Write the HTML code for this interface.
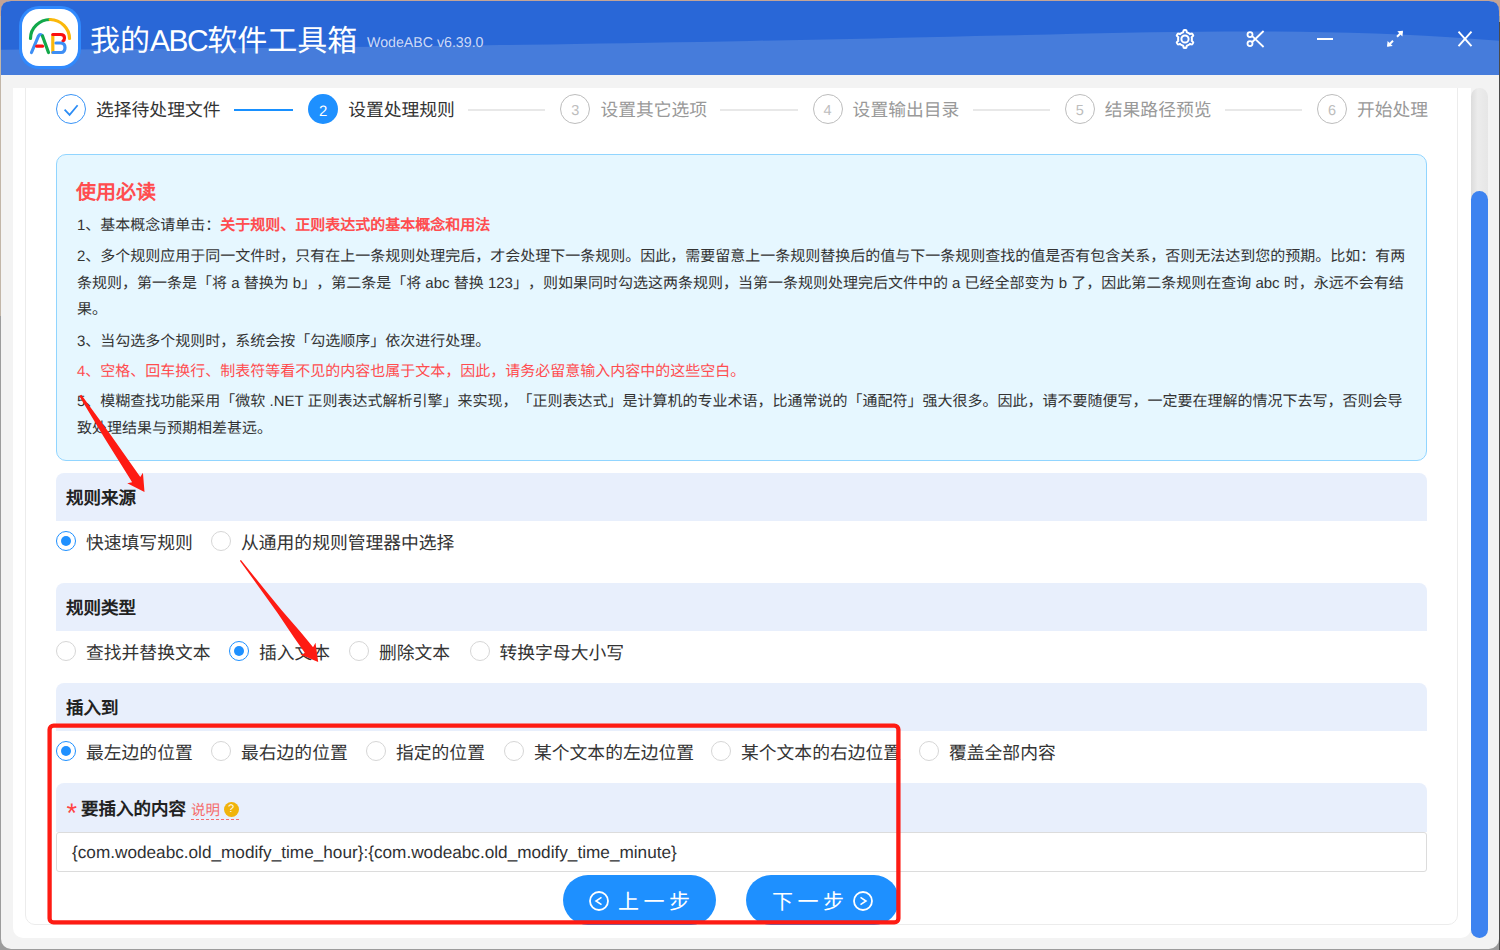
<!DOCTYPE html>
<html lang="zh-CN"><head><meta charset="utf-8">
<style>
*{margin:0;padding:0;box-sizing:border-box}
html,body{width:1500px;height:950px;overflow:hidden}
body{text-spacing-trim:space-all;text-rendering:geometricPrecision;background:#9c9c9c;font-family:"Liberation Sans",sans-serif;position:relative;color:#333}
.abs{position:absolute}
#win{position:absolute;left:1px;top:1px;width:1498px;height:948px;border-radius:10px;background:#f3f3f3;overflow:hidden}
#panel{position:absolute;left:13px;top:88px;width:1458px;height:850px;background:#fff;border-radius:0 0 10px 10px;overflow:hidden}
#inner{position:absolute;left:12px;top:-20px;width:1433px;height:857px;border:1px solid #ececec;border-radius:10px}
#track{position:absolute;left:1471px;top:88px;width:17px;height:850px;border-radius:9px;background:linear-gradient(90deg,#dcdcdc,#ececec 40%,#e6e6e6)}
#thumb{position:absolute;left:1471px;top:191px;width:17px;height:747px;border-radius:9px;background:#3d83f0}
.txt{position:absolute;white-space:nowrap;line-height:1}
</style></head><body>
<div class="abs" style="left:0;top:0;width:1500px;height:16px;background:#c4a496"></div>
<div class="abs" style="left:0;top:16px;width:1px;height:300px;background:#c2b6a8"></div>
<div class="abs" style="left:1499px;top:22px;width:1px;height:928px;background:#4a4a4a"></div>
<div id="win"></div>
<!-- title bar -->
<svg class="abs" style="left:1px;top:1px" width="1498" height="74" viewBox="1 1 1498 74">
  <path d="M1 11 Q1 1 11 1 L1489 1 Q1499 1 1499 11 L1499 75 L1 75 Z" fill="#2967d7"/>
  <path d="M0 49.7 L25 49.6 L50 49.5 L75 49.4 L100 49.2 L125 49.1 L150 48.9 L175 48.7 L200 48.5 L225 48.3 L250 48.1 L275 47.8 L300 47.6 L325 47.3 L350 47.0 L375 46.8 L400 46.5 L425 46.1 L450 45.8 L475 45.5 L500 45.1 L525 44.8 L550 44.4 L575 44.0 L600 43.6 L625 43.2 L650 42.7 L675 42.3 L700 41.9 L725 41.4 L750 40.9 L775 40.4 L800 39.9 L825 39.4 L850 38.9 L875 38.4 L900 37.8 L925 37.3 L950 36.7 L975 36.1 L1000 35.6 L1025 35.0 L1050 34.4 L1075 33.8 L1100 33.3 L1125 32.8 L1150 32.3 L1175 32.0 L1200 31.7 L1225 31.6 L1250 31.5 L1275 31.6 L1300 31.8 L1325 32.2 L1350 32.8 L1375 33.6 L1400 34.6 L1425 35.8 L1450 37.2 L1475 38.9 L1500 40.8 L1500 75 L0 75 Z" fill="#467cdb"/>
</svg>

<!-- logo -->
<div class="abs" style="left:19px;top:6px;width:62px;height:63px;border-radius:20px;background:#3089fd"></div>
<div class="abs" style="left:22px;top:9px;width:56px;height:57px;border-radius:17px;background:#fff"></div>
<svg class="abs" style="left:15px;top:0px" width="70" height="75" viewBox="0 0 70 75">
  <g fill="none" stroke-linecap="round" stroke-width="3.2">
    <path d="M15.5 38.5 A20 19 0 0 1 35.2 19.5" stroke="#12a84a"/>
    <path d="M35.2 19.5 A20 19 0 0 1 54.5 38.5" stroke="#fbb80a"/>
    <path d="M16.5 52.5 L23.5 36 Q25.3 33 27.5 36" stroke="#3d8ef5"/>
    <path d="M27.5 36 L33.5 52.5" stroke="#12a84a"/>
    <path d="M21.8 46.2 L27.5 46.2" stroke="#fb0f0f"/>
    <path d="M37.8 35 L37.8 52.5" stroke="#fbb80a"/>
    <path d="M37.8 34.5 L45.5 34.5 Q49.5 34.5 49.5 38 Q49.5 40 48 41" stroke="#fb0f0f"/>
    <path d="M38 52.5 L46 52.5 Q50 52.5 50 47.5 Q50 43 45.5 43 L41 43" stroke="#3d8ef5"/>
  </g>
</svg>
<div class="txt" style="left:90px;top:26.5px;font-size:30px;color:#fff">我的<span style="letter-spacing:-1.5px">ABC</span>软件工具箱</div>
<div class="txt" style="left:367px;top:35.5px;font-size:14.2px;color:#cfdaf5">WodeABC v6.39.0</div>
<!-- icons -->
<svg class="abs" style="left:1170px;top:24px" width="30" height="30" viewBox="0 0 30 30">
  <path d="M21.90 15.00 L21.90 15.24 L21.88 15.48 L21.86 15.72 L21.83 15.96 L21.80 16.20 L21.75 16.43 L21.70 16.67 L21.91 16.98 L22.38 17.40 L22.83 17.85 L23.25 18.33 L23.13 18.62 L23.00 18.90 L22.86 19.18 L22.71 19.45 L22.55 19.72 L22.38 19.98 L22.20 20.23 L22.01 20.48 L21.38 20.35 L20.76 20.19 L20.17 19.99 L19.79 19.96 L19.62 20.13 L19.44 20.29 L19.25 20.44 L19.06 20.58 L18.86 20.72 L18.66 20.85 L18.45 20.98 L18.24 21.09 L18.02 21.20 L17.81 21.30 L17.58 21.40 L17.36 21.48 L17.13 21.56 L16.90 21.63 L16.74 21.97 L16.61 22.59 L16.45 23.20 L16.24 23.81 L15.93 23.85 L15.62 23.88 L15.31 23.89 L15.00 23.90 L14.69 23.89 L14.38 23.88 L14.07 23.85 L13.76 23.81 L13.55 23.20 L13.39 22.59 L13.26 21.97 L13.10 21.63 L12.87 21.56 L12.64 21.48 L12.42 21.40 L12.19 21.30 L11.98 21.20 L11.76 21.09 L11.55 20.98 L11.34 20.85 L11.14 20.72 L10.94 20.58 L10.75 20.44 L10.56 20.29 L10.38 20.13 L10.21 19.96 L9.83 19.99 L9.24 20.19 L8.62 20.35 L7.99 20.48 L7.80 20.23 L7.62 19.98 L7.45 19.72 L7.29 19.45 L7.14 19.18 L7.00 18.90 L6.87 18.62 L6.75 18.33 L7.17 17.85 L7.62 17.40 L8.09 16.98 L8.30 16.67 L8.25 16.43 L8.20 16.20 L8.17 15.96 L8.14 15.72 L8.12 15.48 L8.10 15.24 L8.10 15.00 L8.10 14.76 L8.12 14.52 L8.14 14.28 L8.17 14.04 L8.20 13.80 L8.25 13.57 L8.30 13.33 L8.09 13.02 L7.62 12.60 L7.17 12.15 L6.75 11.67 L6.87 11.38 L7.00 11.10 L7.14 10.82 L7.29 10.55 L7.45 10.28 L7.62 10.02 L7.80 9.77 L7.99 9.52 L8.62 9.65 L9.24 9.81 L9.83 10.01 L10.21 10.04 L10.38 9.87 L10.56 9.71 L10.75 9.56 L10.94 9.42 L11.14 9.28 L11.34 9.15 L11.55 9.02 L11.76 8.91 L11.98 8.80 L12.19 8.70 L12.42 8.60 L12.64 8.52 L12.87 8.44 L13.10 8.37 L13.26 8.03 L13.39 7.41 L13.55 6.80 L13.76 6.19 L14.07 6.15 L14.38 6.12 L14.69 6.11 L15.00 6.10 L15.31 6.11 L15.62 6.12 L15.93 6.15 L16.24 6.19 L16.45 6.80 L16.61 7.41 L16.74 8.03 L16.90 8.37 L17.13 8.44 L17.36 8.52 L17.58 8.60 L17.81 8.70 L18.02 8.80 L18.24 8.91 L18.45 9.02 L18.66 9.15 L18.86 9.28 L19.06 9.42 L19.25 9.56 L19.44 9.71 L19.62 9.87 L19.79 10.04 L20.17 10.01 L20.76 9.81 L21.38 9.65 L22.01 9.52 L22.20 9.77 L22.38 10.02 L22.55 10.28 L22.71 10.55 L22.86 10.82 L23.00 11.10 L23.13 11.38 L23.25 11.67 L22.83 12.15 L22.38 12.60 L21.91 13.02 L21.70 13.33 L21.75 13.57 L21.80 13.80 L21.83 14.04 L21.86 14.28 L21.88 14.52 L21.90 14.76Z" fill="none" stroke="#fff" stroke-width="2" stroke-linejoin="round"/>
  <circle cx="15" cy="15" r="3.6" fill="none" stroke="#fff" stroke-width="2"/>
</svg>
<svg class="abs" style="left:1240px;top:24px" width="30" height="30" viewBox="0 0 30 30">
  <circle cx="10" cy="10.6" r="2.5" fill="none" stroke="#fff" stroke-width="1.8"/>
  <circle cx="10" cy="19.6" r="2.5" fill="none" stroke="#fff" stroke-width="1.8"/>
  <path d="M23.6 7 L12.2 18 M23.6 23 L12.2 12.2" stroke="#fff" stroke-width="1.8"/>
</svg>
<div class="abs" style="left:1317px;top:38px;width:16px;height:2px;background:#fff"></div>
<svg class="abs" style="left:1380px;top:24px" width="30" height="30" viewBox="0 0 30 30">
  <path d="M8 21.7 L13 16.7 M17 12.7 L22 7.7" stroke="#fff" stroke-width="2"/>
  <path d="M7 22.7 L7.6 17 L12.7 22.1 Z M23 6.7 L22.4 12.4 L17.3 7.3 Z" fill="#fff"/>
</svg>
<svg class="abs" style="left:1450px;top:24px" width="30" height="30" viewBox="0 0 30 30">
  <path d="M8.5 7.7 L21.5 22.2 M21.5 7.7 L8.5 22.2" stroke="#fff" stroke-width="1.9"/>
</svg>
<div id="panel"><div id="inner"></div></div>
<!-- steps -->
<div class="abs" style="left:56.0px;top:94px;width:30px;height:30px;border:1.3px solid #3b95f7;border-radius:50%"></div>
<svg class="abs" style="left:56.0px;top:94px" width="30" height="30" viewBox="0 0 30 30"><path d="M8.6 15.6 L13.6 20.9 L21.6 11.2" fill="none" stroke="#2b8cf5" stroke-width="1.7"/></svg>
<div class="txt" style="left:96.0px;top:101.5px;font-size:17.8px;color:#333">选择待处理文件</div>
<div class="abs" style="left:308.2px;top:94px;width:30px;height:30px;background:#1e90ff;border-radius:50%;color:#fff;font-size:15px;line-height:35.5px;text-align:center">2</div>
<div class="txt" style="left:348.2px;top:101.5px;font-size:17.8px;color:#333">设置处理规则</div>
<div class="abs" style="left:560.4px;top:94px;width:30px;height:30px;border:1px solid #bdbdbd;border-radius:50%;color:#bdbdbd;font-size:14.5px;line-height:33px;text-align:center">3</div>
<div class="txt" style="left:600.4px;top:101.5px;font-size:17.8px;color:#999">设置其它选项</div>
<div class="abs" style="left:812.6px;top:94px;width:30px;height:30px;border:1px solid #bdbdbd;border-radius:50%;color:#bdbdbd;font-size:14.5px;line-height:33px;text-align:center">4</div>
<div class="txt" style="left:852.6px;top:101.5px;font-size:17.8px;color:#999">设置输出目录</div>
<div class="abs" style="left:1064.8px;top:94px;width:30px;height:30px;border:1px solid #bdbdbd;border-radius:50%;color:#bdbdbd;font-size:14.5px;line-height:33px;text-align:center">5</div>
<div class="txt" style="left:1104.8px;top:101.5px;font-size:17.8px;color:#999">结果路径预览</div>
<div class="abs" style="left:1317.0px;top:94px;width:30px;height:30px;border:1px solid #bdbdbd;border-radius:50%;color:#bdbdbd;font-size:14.5px;line-height:33px;text-align:center">6</div>
<div class="txt" style="left:1357.0px;top:101.5px;font-size:17.8px;color:#999">开始处理</div>
<div class="abs" style="left:234px;top:109px;width:59px;height:2px;background:#1890ff"></div>
<div class="abs" style="left:468px;top:109px;width:77px;height:2px;background:#e8e8e8"></div>
<div class="abs" style="left:720px;top:109px;width:78px;height:2px;background:#e8e8e8"></div>
<div class="abs" style="left:973px;top:109px;width:77px;height:2px;background:#e8e8e8"></div>
<div class="abs" style="left:1225px;top:109px;width:77px;height:2px;background:#e8e8e8"></div>
<!-- info box -->
<div class="abs" style="left:56px;top:154px;width:1371px;height:307px;background:#e6f7ff;border:1px solid #91d5ff;border-radius:10px"></div>
<div class="txt" style="left:76px;top:183px;font-size:20px;font-weight:bold;color:#ff4d4f">使用必读</div>
<div class="abs" style="left:77px;top:212.0px;height:27px;line-height:27px;white-space:nowrap;font-size:15px;color:#333;">1、基本概念请单击：<b style="color:#ff4d4f">关于规则、正则表达式的基本概念和用法</b></div>
<div class="abs" style="left:77px;top:242.7px;height:27px;line-height:27px;white-space:nowrap;font-size:15px;color:#333;">2、多个规则应用于同一文件时，只有在上一条规则处理完后，才会处理下一条规则。因此，需要留意上一条规则替换后的值与下一条规则查找的值是否有包含关系，否则无法达到您的预期。比如：有两</div>
<div class="abs" style="left:77px;top:269.9px;height:27px;line-height:27px;white-space:nowrap;font-size:15px;color:#333;">条规则，第一条是「将 a 替换为 b」，第二条是「将 abc 替换 123」，则如果同时勾选这两条规则，当第一条规则处理完后文件中的 a 已经全部变为 b 了，因此第二条规则在查询 abc 时，永远不会有结</div>
<div class="abs" style="left:77px;top:296.4px;height:27px;line-height:27px;white-space:nowrap;font-size:15px;color:#333;">果。</div>
<div class="abs" style="left:77px;top:327.5px;height:27px;line-height:27px;white-space:nowrap;font-size:15px;color:#333;">3、当勾选多个规则时，系统会按「勾选顺序」依次进行处理。</div>
<div class="abs" style="left:77px;top:357.5px;height:27px;line-height:27px;white-space:nowrap;font-size:15px;color:#333;color:#ff4d4f">4、空格、回车换行、制表符等看不见的内容也属于文本，因此，请务必留意输入内容中的这些空白。</div>
<div class="abs" style="left:77px;top:387.5px;height:27px;line-height:27px;white-space:nowrap;font-size:15px;color:#333;">5、模糊查找功能采用「微软 .NET 正则表达式解析引擎」来实现，「正则表达式」是计算机的专业术语，比通常说的「通配符」强大很多。因此，请不要随便写，一定要在理解的情况下去写，否则会导</div>
<div class="abs" style="left:77px;top:414.5px;height:27px;line-height:27px;white-space:nowrap;font-size:15px;color:#333;">致处理结果与预期相差甚远。</div>
<!-- sections -->
<div class="abs" style="left:56px;top:473px;width:1371px;height:47.5px;background:#e8effc;border-radius:8px 8px 0 0"></div>
<div class="abs" style="left:66px;top:484.5px;height:27px;line-height:27px;white-space:nowrap;font-size:17.5px;font-weight:bold;color:#222">规则来源</div>
<div class="abs" style="left:56px;top:583px;width:1371px;height:48px;background:#e8effc;border-radius:8px 8px 0 0"></div>
<div class="abs" style="left:66px;top:594.5px;height:27px;line-height:27px;white-space:nowrap;font-size:17.5px;font-weight:bold;color:#222">规则类型</div>
<div class="abs" style="left:56px;top:683px;width:1371px;height:48px;background:#e8effc;border-radius:8px 8px 0 0"></div>
<div class="abs" style="left:66px;top:694.5px;height:27px;line-height:27px;white-space:nowrap;font-size:17.5px;font-weight:bold;color:#222">插入到</div>
<div class="abs" style="left:56px;top:783px;width:1371px;height:49px;background:#e8effc;border-radius:8px 8px 0 0"></div>
<div class="abs" style="left:56px;top:531px;width:20px;height:20px;border:1px solid #1e90ff;border-radius:50%"></div>
<div class="abs" style="left:61px;top:536px;width:10px;height:10px;background:#1e90ff;border-radius:50%"></div>
<div class="abs" style="left:86px;top:529.5px;height:27px;line-height:27px;white-space:nowrap;font-size:17.8px;color:#333">快速填写规则</div>
<div class="abs" style="left:211px;top:531px;width:20px;height:20px;border:1px solid #d6d6d6;border-radius:50%"></div>
<div class="abs" style="left:241px;top:529.5px;height:27px;line-height:27px;white-space:nowrap;font-size:17.8px;color:#333">从通用的规则管理器中选择</div>
<div class="abs" style="left:56px;top:641px;width:20px;height:20px;border:1px solid #d6d6d6;border-radius:50%"></div>
<div class="abs" style="left:86px;top:639.5px;height:27px;line-height:27px;white-space:nowrap;font-size:17.8px;color:#333">查找并替换文本</div>
<div class="abs" style="left:229px;top:641px;width:20px;height:20px;border:1px solid #1e90ff;border-radius:50%"></div>
<div class="abs" style="left:234px;top:646px;width:10px;height:10px;background:#1e90ff;border-radius:50%"></div>
<div class="abs" style="left:259px;top:639.5px;height:27px;line-height:27px;white-space:nowrap;font-size:17.8px;color:#333">插入文本</div>
<div class="abs" style="left:349px;top:641px;width:20px;height:20px;border:1px solid #d6d6d6;border-radius:50%"></div>
<div class="abs" style="left:379px;top:639.5px;height:27px;line-height:27px;white-space:nowrap;font-size:17.8px;color:#333">删除文本</div>
<div class="abs" style="left:469.5px;top:641px;width:20px;height:20px;border:1px solid #d6d6d6;border-radius:50%"></div>
<div class="abs" style="left:499.5px;top:639.5px;height:27px;line-height:27px;white-space:nowrap;font-size:17.8px;color:#333">转换字母大小写</div>
<div class="abs" style="left:56px;top:741px;width:20px;height:20px;border:1px solid #1e90ff;border-radius:50%"></div>
<div class="abs" style="left:61px;top:746px;width:10px;height:10px;background:#1e90ff;border-radius:50%"></div>
<div class="abs" style="left:86px;top:739.5px;height:27px;line-height:27px;white-space:nowrap;font-size:17.8px;color:#333">最左边的位置</div>
<div class="abs" style="left:211px;top:741px;width:20px;height:20px;border:1px solid #d6d6d6;border-radius:50%"></div>
<div class="abs" style="left:241px;top:739.5px;height:27px;line-height:27px;white-space:nowrap;font-size:17.8px;color:#333">最右边的位置</div>
<div class="abs" style="left:366px;top:741px;width:20px;height:20px;border:1px solid #d6d6d6;border-radius:50%"></div>
<div class="abs" style="left:396px;top:739.5px;height:27px;line-height:27px;white-space:nowrap;font-size:17.8px;color:#333">指定的位置</div>
<div class="abs" style="left:504px;top:741px;width:20px;height:20px;border:1px solid #d6d6d6;border-radius:50%"></div>
<div class="abs" style="left:534px;top:739.5px;height:27px;line-height:27px;white-space:nowrap;font-size:17.8px;color:#333">某个文本的左边位置</div>
<div class="abs" style="left:711px;top:741px;width:20px;height:20px;border:1px solid #d6d6d6;border-radius:50%"></div>
<div class="abs" style="left:741px;top:739.5px;height:27px;line-height:27px;white-space:nowrap;font-size:17.8px;color:#333">某个文本的右边位置</div>
<div class="abs" style="left:919px;top:741px;width:20px;height:20px;border:1px solid #d6d6d6;border-radius:50%"></div>
<div class="abs" style="left:949px;top:739.5px;height:27px;line-height:27px;white-space:nowrap;font-size:17.8px;color:#333">覆盖全部内容</div>
<div class="txt" style="left:66.5px;top:800px;font-size:27px;color:#f44">*</div>
<div class="abs" style="left:81px;top:795.5px;height:27px;line-height:27px;white-space:nowrap;font-size:17.5px;font-weight:bold;color:#222">要插入的内容</div>
<div class="abs" style="left:191px;top:796px;height:24px;line-height:30px;white-space:nowrap;font-size:14.5px;color:#f56c6c;border-bottom:1px dashed #f56c6c">说明 <span style="display:inline-block;width:15px;height:15px;border-radius:50%;background:#f0b30b;color:#fff;font-size:11px;line-height:15px;text-align:center;vertical-align:3px;margin-left:-0.5px">?</span></div>
<div class="abs" style="left:56px;top:832px;width:1371px;height:40px;border:1px solid #dcdcdc;border-radius:3px;background:#fff"></div>
<div class="abs" style="left:72px;top:838.5px;height:27px;line-height:27px;white-space:nowrap;font-size:17.2px;color:#303133">{com.wodeabc.old_modify_time_hour}:{com.wodeabc.old_modify_time_minute}</div>
<!-- buttons -->
<div class="abs" style="left:563px;top:875px;width:153px;height:50px;border-radius:25px;background:#1e90ff"></div>
<div class="abs" style="left:746px;top:875px;width:153px;height:50px;border-radius:25px;background:#1e90ff"></div>
<svg class="abs" style="left:589px;top:891px" width="20" height="20" viewBox="0 0 20 20"><circle cx="10" cy="10" r="9" fill="none" stroke="#fff" stroke-width="1.8"/><path d="M12.5 6.3 L7 10 L12.5 13.7" fill="none" stroke="#fff" stroke-width="1.6"/></svg>
<svg class="abs" style="left:853px;top:891px" width="20" height="20" viewBox="0 0 20 20"><circle cx="10" cy="10" r="9" fill="none" stroke="#fff" stroke-width="1.8"/><path d="M7.5 6.3 L13 10 L7.5 13.7" fill="none" stroke="#fff" stroke-width="1.6"/></svg>
<div class="txt" style="left:618px;top:891.5px;font-size:21px;color:#fff;letter-spacing:4.5px;font-weight:300">上一步</div>
<div class="txt" style="left:772px;top:891.5px;font-size:21px;color:#fff;letter-spacing:4.5px;font-weight:300">下一步</div>
<!-- annotations -->
<svg class="abs" style="left:0;top:0" width="1500" height="950" viewBox="0 0 1500 950">
  <rect x="49.6" y="725.6" width="848.8" height="196.8" rx="4" ry="4" fill="none" stroke="#fe1b13" stroke-width="4.3"/>
  <path d="M79.30 395.96 L104.00 437.18 L130.00 478.73 L132.13 482.31 L127.27 483.13 L144.50 492.10 L142.94 472.74 L140.29 476.89 L137.83 473.54 L109.66 433.42 L81.30 394.64Z" fill="#fe1b13"/>
  <path d="M239.84 560.83 L265.70 596.44 L277.91 613.55 L293.87 637.21 L302.82 649.89 L305.11 653.22 L300.25 654.43 L318.20 662.10 L315.50 642.76 L313.06 647.15 L310.44 644.06 L300.55 632.11 L281.88 610.51 L268.56 594.25 L240.96 559.97Z" fill="#fe1b13"/>
</svg>
<div id="track"></div>
<div id="thumb"></div>
</body></html>
